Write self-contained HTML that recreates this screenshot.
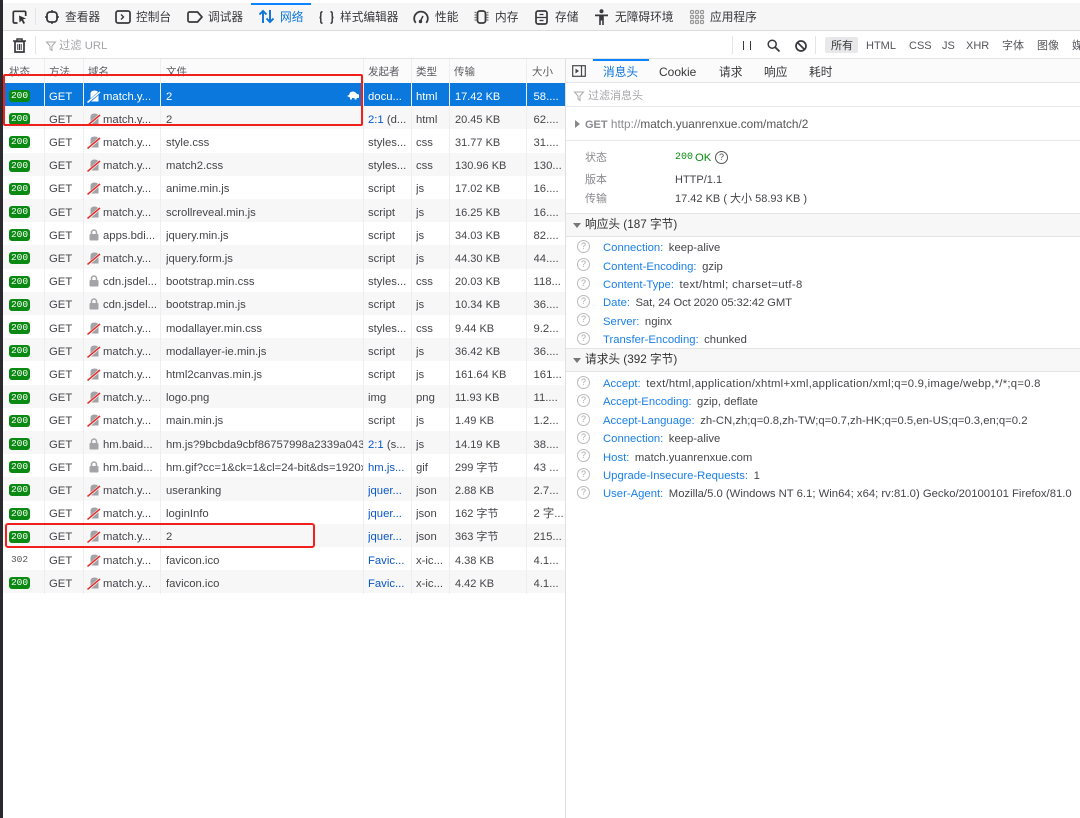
<!DOCTYPE html>
<html lang="zh-CN"><head><meta charset="utf-8"><title>网络</title>
<style>
html,body{margin:0;padding:0;background:#fff}
body{width:1080px;height:818px;position:relative;overflow:hidden;font:11px "Liberation Sans","Noto Sans CJK SC",sans-serif;color:#38383d}
.a{position:absolute;white-space:nowrap}
svg{position:absolute;overflow:visible}
.tb{font-size:11.7px;top:10.5px;line-height:14px;color:#38383d}
.v{position:absolute;width:1px;background:#e4e4e6}
.r{position:absolute;left:3px;width:562px;height:23.2px;line-height:23px;font-size:11.3px;color:#45454a}
.r.o{background:#f7f7f8}
.r span{position:absolute;top:2.5px;white-space:nowrap;overflow:hidden}
.r .s{left:6px;top:7px;width:21px;height:12px;background:#0a8a12;color:#fff;border-radius:3px;text-align:center;font:9.5px/12.5px "Liberation Mono",monospace}
.r .s.n{background:none;color:#555}
.r .m{left:46px}
.r .d{left:100px;width:58px}
.r .f{left:163px;width:197px}
.r .i{left:365px;width:44px;color:#45454a}
.r .i b{font-weight:normal;color:#0a58c8}
.r .t{left:413px;width:35px}
.r .z{left:452px;font-size:11px}
.r .y{left:530.5px;width:30px}
.r svg{left:84px;top:5.5px}
.r.sel{background:#0a78dc;color:#fff}
.r.sel .i,.r.sel .y{color:#fff}
.h{position:absolute;left:603px;font-size:11.3px;line-height:14px;white-space:nowrap;color:#45454a}
.h b{font-weight:normal;color:#1a7fe8;margin-right:5.5px}
.q{position:absolute;left:577px;width:11px;height:11px;border:1px solid #bbb;border-radius:50%;color:#aaa;font:9px/11px "Liberation Sans",sans-serif;text-align:center}
.sec{position:absolute;left:566px;width:514px;background:#f7f7f8;border-top:1px solid #e4e4e6;border-bottom:1px solid #e4e4e6;height:22px;line-height:22px;font-size:11.7px;color:#333}
.sec i{position:absolute;left:7px;top:9px;border:4px solid transparent;border-top:5px solid #777;border-bottom:0}
.sec span{position:absolute;left:19px}
.lb{position:absolute;left:585px;color:#8a8a8f;font-size:11px;line-height:14px}
.vl{position:absolute;left:675px;color:#45454a;font-size:11px;line-height:14px;white-space:nowrap}
.hd{position:absolute;top:65px;font-size:10.5px;line-height:14px;color:#5a5a60;white-space:nowrap}
.fl{top:39px;font-size:11px;line-height:15px;color:#55555a}
.tab{top:64.500px;font-size:11.700px;line-height:15px}
</style></head><body>
<svg width="0" height="0" style="position:absolute"><defs>
<symbol id="ns" viewBox="0 0 14 14"><path d="M3.500 12.500V5Q3.500 1.500 7.500 1.500T11.500 5V12.500z" fill="#a2a2a6"/><path d="M1 13.500L13 3" stroke="#fff" stroke-width="2.600"/><path d="M.5 13.500L13 3" stroke="#e0302c" stroke-width="1.500"/></symbol>
<symbol id="nw" viewBox="0 0 14 14"><path d="M3.500 12.500V5Q3.500 1.500 7.500 1.500T11.500 5V12.500z" fill="#fff"/><path d="M1 13.500L13 3" stroke="#0a78dc" stroke-width="2.600"/><path d="M.5 13.500L13 3" stroke="#fff" stroke-width="1.500"/></symbol>
<symbol id="lk" viewBox="0 0 14 14"><rect x="2.500" y="6" width="9" height="6.500" rx="1" fill="#a4a4a8"/><path d="M4.500 6V4.500a2.500 2.500 0 0 1 5 0V6" fill="none" stroke="#a4a4a8" stroke-width="1.500"/></symbol>
</defs></svg>

<div class="a" style="left:0;top:0;width:3px;height:818px;background:#2a2a2e"></div>
<div class="a" style="left:3px;top:0;width:1077px;height:3px;background:#fff"></div>
<div class="a" style="left:3px;top:3px;width:1077px;height:27px;background:#f6f6f7;border-bottom:1px solid #dcdcde"></div>
<div class="a" style="left:3px;top:31px;width:1077px;height:27px;background:#fff;border-bottom:1px solid #e4e4e6"></div>

<!-- top toolbar -->
<svg style="left:12px;top:10px" width="15" height="15" viewBox="0 0 15 15"><path d="M5.500 13H2.500a1.200 1.200 0 0 1-1.200-1.200V2.500A1.200 1.200 0 0 1 2.500 1.300h10a1.200 1.200 0 0 1 1.200 1.200V6" fill="none" stroke="#333" stroke-width="1.700"/><path d="M7 5.500l7 3-3 1 2 3.500-1.500 1-2-3.500-2 2z" fill="#333"/></svg>
<div class="v" style="left:35px;top:8px;height:17px"></div>
<svg style="left:45px;top:10px" width="14" height="14" viewBox="0 0 14 14"><rect x="2" y="2" width="10" height="10" rx="3" fill="none" stroke="#38383d" stroke-width="1.800"/><path d="M7 0v2.200M7 11.800V14M0 7h2.200M11.800 7H14" stroke="#38383d" stroke-width="1.500"/></svg>
<div class="a tb" style="left:65px">查看器</div>
<svg style="left:115px;top:10px" width="16" height="14" viewBox="0 0 16 14"><rect x="1" y="1" width="14" height="12" rx="2" fill="none" stroke="#38383d" stroke-width="1.700"/><path d="M6 4.500L8.500 7 6 9.500" fill="none" stroke="#38383d" stroke-width="1.400"/></svg>
<div class="a tb" style="left:136px">控制台</div>
<svg style="left:187px;top:11px" width="16" height="12" viewBox="0 0 16 12"><path d="M2.500 1h8L15 6l-4.500 5h-8A1.500 1.500 0 0 1 1 9.500v-7A1.500 1.500 0 0 1 2.500 1z" fill="none" stroke="#38383d" stroke-width="1.700" stroke-linejoin="round"/></svg>
<div class="a tb" style="left:208px">调试器</div>
<div class="a" style="left:251px;top:3px;width:60px;height:2px;background:#0a84ff"></div>
<svg style="left:258px;top:8px" width="17" height="17" viewBox="0 0 17 17"><path d="M5 15V3M1.500 6.500L5 3l3.500 3.500M12 2v12M8.500 10.500L12 14l3.500-3.500" fill="none" stroke="#0a74d8" stroke-width="1.900"/></svg>
<div class="a tb" style="left:280px;color:#0a74d8">网络</div>
<svg style="left:319px;top:11px" width="15" height="13" viewBox="0 0 15 13"><path d="M3.500.7Q1.800.7 1.800 2.500V5Q1.800 6.500.5 6.500 1.800 6.500 1.800 8V10.500Q1.800 12.300 3.500 12.300M11.500.7Q13.200.7 13.200 2.500V5Q13.200 6.500 14.500 6.500 13.200 6.500 13.200 8V10.500Q13.200 12.300 11.500 12.300" fill="none" stroke="#38383d" stroke-width="1.500"/></svg>
<div class="a tb" style="left:340px">样式编辑器</div>
<svg style="left:413px;top:10px" width="16" height="14" viewBox="0 0 16 14"><path d="M2.800 12.800A6.800 6.800 0 1 1 13.200 12.800" fill="none" stroke="#38383d" stroke-width="1.800"/><path d="M7.500 11L10 6" stroke="#38383d" stroke-width="1.500"/><circle cx="7.500" cy="11.500" r="1.700" fill="#38383d"/></svg>
<div class="a tb" style="left:435px">性能</div>
<svg style="left:474px;top:10px" width="15" height="14" viewBox="0 0 15 14"><rect x="3.500" y="1" width="8" height="12" rx="2.500" fill="none" stroke="#38383d" stroke-width="1.800"/><path d="M.5 2.500h2M.5 5h2M.5 7.500h2M.5 10h2M12.500 2.500h2M12.500 5h2M12.500 7.500h2M12.500 10h2" stroke="#777" stroke-width="1.200"/></svg>
<div class="a tb" style="left:495px">内存</div>
<svg style="left:535px;top:10px" width="13" height="15" viewBox="0 0 13 15"><rect x="1" y="1" width="11" height="13" rx="2" fill="none" stroke="#38383d" stroke-width="1.700"/><path d="M1 7.500h11M4.500 4.500h4M4.500 10.500h4" stroke="#38383d" stroke-width="1.200"/></svg>
<div class="a tb" style="left:555px">存储</div>
<svg style="left:594px;top:9px" width="15" height="16" viewBox="0 0 15 16"><circle cx="7.500" cy="2.200" r="2" fill="#38383d"/><path d="M1 5.500h13v1.800H9.800V16H8.200V11.500H6.800V16H5.200V7.300H1z" fill="#38383d"/></svg>
<div class="a tb" style="left:615px">无障碍环境</div>
<svg style="left:690px;top:10px" width="14" height="14" viewBox="0 0 14 14" fill="none" stroke="#999" stroke-width="1.200"><rect x=".5" y=".5" width="3" height="3" rx="1"/><rect x="5.500" y=".5" width="3" height="3" rx="1"/><rect x="10.500" y=".5" width="3" height="3" rx="1"/><rect x=".5" y="5.500" width="3" height="3" rx="1"/><rect x="5.500" y="5.500" width="3" height="3" rx="1"/><rect x="10.500" y="5.500" width="3" height="3" rx="1"/><rect x=".5" y="10.500" width="3" height="3" rx="1"/><rect x="5.500" y="10.500" width="3" height="3" rx="1"/><rect x="10.500" y="10.500" width="3" height="3" rx="1"/></svg>
<div class="a tb" style="left:710px">应用程序</div>

<!-- filter toolbar -->
<svg style="left:13px;top:38px" width="13" height="15" viewBox="0 0 13 15"><path d="M0 3h13M4 3V1h5v2" fill="none" stroke="#38383d" stroke-width="1.500"/><path d="M2 3.500h9V14H2z" fill="none" stroke="#38383d" stroke-width="1.700"/><path d="M4.800 6v6M6.500 6v6M8.200 6v6" stroke="#38383d"/></svg>
<div class="v" style="left:35px;top:36px;height:18px"></div>
<svg style="left:46px;top:41px" width="10" height="10" viewBox="0 0 10 10"><path d="M.5 1h9L6 5v4.500L4 8V5z" fill="none" stroke="#aaa"/></svg>
<div class="a" style="left:59px;top:38.500px;line-height:15px;font-size:11.300px;color:#a6a6ab">过滤 URL</div>
<div class="v" style="left:732px;top:36px;height:18px"></div>
<div class="a" style="left:743px;top:41px;width:1px;height:9px;background:#38383d"></div>
<div class="a" style="left:750px;top:41px;width:1px;height:9px;background:#38383d"></div>
<svg style="left:767px;top:39px" width="13" height="13" viewBox="0 0 13 13"><circle cx="5.200" cy="5.200" r="4" fill="none" stroke="#38383d" stroke-width="1.500"/><path d="M8.200 8.200L12.500 12.500" stroke="#38383d" stroke-width="1.800"/></svg>
<svg style="left:795px;top:39.500px" width="12" height="12" viewBox="0 0 12 12"><circle cx="6" cy="6" r="5" fill="none" stroke="#38383d" stroke-width="1.700"/><path d="M2.500 2.500l7 7" stroke="#38383d" stroke-width="1.700"/></svg>
<div class="v" style="left:815px;top:36px;height:18px"></div>
<div class="a" style="left:825px;top:37px;width:33px;height:16px;background:#e8e8ea;border-radius:2px"></div>
<div class="a fl" style="left:831px;color:#38383d">所有</div>
<div class="a fl" style="left:866px">HTML</div>
<div class="a fl" style="left:909px">CSS</div>
<div class="a fl" style="left:942px">JS</div>
<div class="a fl" style="left:966px">XHR</div>
<div class="a fl" style="left:1002px">字体</div>
<div class="a fl" style="left:1037px">图像</div>
<div class="a fl" style="left:1072px">媒</div>

<!-- table header -->
<div class="a" style="left:3px;top:59px;width:562px;height:24px;background:#fbfbfb;border-bottom:1px solid #e4e4e6"></div>
<div class="hd" style="left:9px">状态</div>
<div class="hd" style="left:49px">方法</div>
<div class="hd" style="left:88px">域名</div>
<div class="hd" style="left:166px">文件</div>
<div class="hd" style="left:368px">发起者</div>
<div class="hd" style="left:416px">类型</div>
<div class="hd" style="left:454px">传输</div>
<div class="hd" style="left:532px">大小</div>

<!-- rows -->
<div class="r sel" style="top:83px"><span class="s">200</span><span class="m">GET</span><svg width="14" height="14"><use href="#nw"/></svg><span class="d">match.y...</span><span class="f">2</span><span class="i">docu...</span><span class="t">html</span><span class="z">17.42 KB</span><span class="y">58....</span></div>
<div class="r o" style="top:106.200px"><span class="s">200</span><span class="m">GET</span><svg width="14" height="14"><use href="#ns"/></svg><span class="d">match.y...</span><span class="f">2</span><span class="i"><b>2:1</b> (d...</span><span class="t">html</span><span class="z">20.45 KB</span><span class="y">62....</span></div>
<div class="r" style="top:129.400px"><span class="s">200</span><span class="m">GET</span><svg width="14" height="14"><use href="#ns"/></svg><span class="d">match.y...</span><span class="f">style.css</span><span class="i">styles...</span><span class="t">css</span><span class="z">31.77 KB</span><span class="y">31....</span></div>
<div class="r o" style="top:152.600px"><span class="s">200</span><span class="m">GET</span><svg width="14" height="14"><use href="#ns"/></svg><span class="d">match.y...</span><span class="f">match2.css</span><span class="i">styles...</span><span class="t">css</span><span class="z">130.96 KB</span><span class="y">130...</span></div>
<div class="r" style="top:175.800px"><span class="s">200</span><span class="m">GET</span><svg width="14" height="14"><use href="#ns"/></svg><span class="d">match.y...</span><span class="f">anime.min.js</span><span class="i">script</span><span class="t">js</span><span class="z">17.02 KB</span><span class="y">16....</span></div>
<div class="r o" style="top:199px"><span class="s">200</span><span class="m">GET</span><svg width="14" height="14"><use href="#ns"/></svg><span class="d">match.y...</span><span class="f">scrollreveal.min.js</span><span class="i">script</span><span class="t">js</span><span class="z">16.25 KB</span><span class="y">16....</span></div>
<div class="r" style="top:222.200px"><span class="s">200</span><span class="m">GET</span><svg width="14" height="14"><use href="#lk"/></svg><span class="d">apps.bdi...</span><span class="f">jquery.min.js</span><span class="i">script</span><span class="t">js</span><span class="z">34.03 KB</span><span class="y">82....</span></div>
<div class="r o" style="top:245.400px"><span class="s">200</span><span class="m">GET</span><svg width="14" height="14"><use href="#ns"/></svg><span class="d">match.y...</span><span class="f">jquery.form.js</span><span class="i">script</span><span class="t">js</span><span class="z">44.30 KB</span><span class="y">44....</span></div>
<div class="r" style="top:268.600px"><span class="s">200</span><span class="m">GET</span><svg width="14" height="14"><use href="#lk"/></svg><span class="d">cdn.jsdel...</span><span class="f">bootstrap.min.css</span><span class="i">styles...</span><span class="t">css</span><span class="z">20.03 KB</span><span class="y">118...</span></div>
<div class="r o" style="top:291.800px"><span class="s">200</span><span class="m">GET</span><svg width="14" height="14"><use href="#lk"/></svg><span class="d">cdn.jsdel...</span><span class="f">bootstrap.min.js</span><span class="i">script</span><span class="t">js</span><span class="z">10.34 KB</span><span class="y">36....</span></div>
<div class="r" style="top:315px"><span class="s">200</span><span class="m">GET</span><svg width="14" height="14"><use href="#ns"/></svg><span class="d">match.y...</span><span class="f">modallayer.min.css</span><span class="i">styles...</span><span class="t">css</span><span class="z">9.44 KB</span><span class="y">9.2...</span></div>
<div class="r o" style="top:338.200px"><span class="s">200</span><span class="m">GET</span><svg width="14" height="14"><use href="#ns"/></svg><span class="d">match.y...</span><span class="f">modallayer-ie.min.js</span><span class="i">script</span><span class="t">js</span><span class="z">36.42 KB</span><span class="y">36....</span></div>
<div class="r" style="top:361.400px"><span class="s">200</span><span class="m">GET</span><svg width="14" height="14"><use href="#ns"/></svg><span class="d">match.y...</span><span class="f">html2canvas.min.js</span><span class="i">script</span><span class="t">js</span><span class="z">161.64 KB</span><span class="y">161...</span></div>
<div class="r o" style="top:384.600px"><span class="s">200</span><span class="m">GET</span><svg width="14" height="14"><use href="#ns"/></svg><span class="d">match.y...</span><span class="f">logo.png</span><span class="i">img</span><span class="t">png</span><span class="z">11.93 KB</span><span class="y">11....</span></div>
<div class="r" style="top:407.800px"><span class="s">200</span><span class="m">GET</span><svg width="14" height="14"><use href="#ns"/></svg><span class="d">match.y...</span><span class="f">main.min.js</span><span class="i">script</span><span class="t">js</span><span class="z">1.49 KB</span><span class="y">1.2...</span></div>
<div class="r o" style="top:431px"><span class="s">200</span><span class="m">GET</span><svg width="14" height="14"><use href="#lk"/></svg><span class="d">hm.baid...</span><span class="f">hm.js?9bcbda9cbf86757998a2339a0437208e</span><span class="i"><b>2:1</b> (s...</span><span class="t">js</span><span class="z">14.19 KB</span><span class="y">38....</span></div>
<div class="r" style="top:454.200px"><span class="s">200</span><span class="m">GET</span><svg width="14" height="14"><use href="#lk"/></svg><span class="d">hm.baid...</span><span class="f">hm.gif?cc=1&amp;ck=1&amp;cl=24-bit&amp;ds=1920x1080</span><span class="i"><b>hm.js...</b></span><span class="t">gif</span><span class="z">299 字节</span><span class="y">43 ...</span></div>
<div class="r o" style="top:477.400px"><span class="s">200</span><span class="m">GET</span><svg width="14" height="14"><use href="#ns"/></svg><span class="d">match.y...</span><span class="f">useranking</span><span class="i"><b>jquer...</b></span><span class="t">json</span><span class="z">2.88 KB</span><span class="y">2.7...</span></div>
<div class="r" style="top:500.600px"><span class="s">200</span><span class="m">GET</span><svg width="14" height="14"><use href="#ns"/></svg><span class="d">match.y...</span><span class="f">loginInfo</span><span class="i"><b>jquer...</b></span><span class="t">json</span><span class="z">162 字节</span><span class="y">2 字...</span></div>
<div class="r o" style="top:523.800px"><span class="s">200</span><span class="m">GET</span><svg width="14" height="14"><use href="#ns"/></svg><span class="d">match.y...</span><span class="f">2</span><span class="i"><b>jquer...</b></span><span class="t">json</span><span class="z">363 字节</span><span class="y">215...</span></div>
<div class="r" style="top:547px"><span class="s n">302</span><span class="m">GET</span><svg width="14" height="14"><use href="#ns"/></svg><span class="d">match.y...</span><span class="f">favicon.ico</span><span class="i"><b>Favic...</b></span><span class="t">x-ic...</span><span class="z">4.38 KB</span><span class="y">4.1...</span></div>
<div class="r o" style="top:570.200px"><span class="s">200</span><span class="m">GET</span><svg width="14" height="14"><use href="#ns"/></svg><span class="d">match.y...</span><span class="f">favicon.ico</span><span class="i"><b>Favic...</b></span><span class="t">x-ic...</span><span class="z">4.42 KB</span><span class="y">4.1...</span></div>

<!-- column dividers -->
<div class="v" style="left:44px;top:59px;height:535px;background:#eeeef0"></div>
<div class="v" style="left:83px;top:59px;height:535px;background:#eeeef0"></div>
<div class="v" style="left:160px;top:59px;height:535px;background:#eeeef0"></div>
<div class="v" style="left:363px;top:59px;height:535px;background:#eeeef0"></div>
<div class="v" style="left:411px;top:59px;height:535px;background:#eeeef0"></div>
<div class="v" style="left:449px;top:59px;height:535px;background:#eeeef0"></div>
<div class="v" style="left:526px;top:59px;height:535px;background:#eeeef0"></div>
<div class="v" style="left:565px;top:59px;height:759px;background:#e0e0e2"></div>
<svg style="left:347px;top:91px" width="12" height="9" viewBox="0 0 12 9"><path d="M0 5l2-1 1-2.500Q7-1 10 3l2 .5V7H9.500V8.500h-2V7H5v1.500H3V6.500z" fill="#fff"/></svg>

<!-- right panel -->
<div class="a" style="left:566px;top:59px;width:514px;height:23px;background:#fbfbfb;border-bottom:1px solid #e4e4e6"></div>
<svg style="left:572px;top:65px" width="14" height="12" viewBox="0 0 14 12"><rect x=".7" y=".7" width="12.600" height="10.600" fill="none" stroke="#45454a" stroke-width="1.200"/><path d="M9.500 1v10" stroke="#45454a" stroke-width="1.200"/><path d="M3.500 3.500L7 6 3.500 8.500z" fill="#45454a"/></svg>
<div class="a" style="left:593px;top:59px;width:56px;height:2px;background:#0a84ff"></div>
<div class="a tab" style="left:603px;color:#0a74d8">消息头</div>
<div class="a tab" style="left:659px;font-size:12px">Cookie</div>
<div class="a tab" style="left:719px">请求</div>
<div class="a tab" style="left:764px">响应</div>
<div class="a tab" style="left:809px">耗时</div>
<div class="a" style="left:566px;top:106px;width:514px;height:1px;background:#e8e8ea"></div>
<svg style="left:574px;top:91px" width="10" height="10" viewBox="0 0 10 10"><path d="M.5 1h9L6 5v4.500L4 8V5z" fill="none" stroke="#aaa"/></svg>
<div class="a" style="left:588px;top:88.500px;font-size:11px;line-height:15px;color:#a6a6ab">过滤消息头</div>
<div class="a" style="left:575px;top:120px;border-left:5px solid #888;border-top:4px solid transparent;border-bottom:4px solid transparent"></div>
<div class="a" style="left:585px;top:117px;font-size:11.800px;line-height:15px;color:#555"><b style="color:#8a8a8f;font-size:11px">GET</b> <span style="color:#8a8a8f">http://</span>match.yuanrenxue.com/match/2</div>
<div class="a" style="left:566px;top:140px;width:514px;height:1px;background:#e8e8ea"></div>
<div class="lb" style="top:151px">状态</div>
<div class="vl" style="top:151px;font-family:'Liberation Mono',monospace;font-size:10px;color:#0a8a12">200</div>
<div class="vl" style="top:151px;left:695px;color:#0a8a12;font-size:11.300px">OK</div>
<div class="q" style="left:715px;top:151px;border-color:#555;color:#555">?</div>
<div class="lb" style="top:173px">版本</div><div class="vl" style="top:173px">HTTP/1.1</div>
<div class="lb" style="top:192px">传输</div><div class="vl" style="top:192px">17.42 KB ( 大小 58.93 KB )</div>

<div class="sec" style="top:213px"><i></i><span>响应头 (187 字节)</span></div>
<div class="q" style="top:240px">?</div><div class="h" style="top:241px"><b>Connection:</b>keep-alive</div>
<div class="q" style="top:258px">?</div><div class="h" style="top:260px"><b>Content-Encoding:</b>gzip</div>
<div class="q" style="top:277px">?</div><div class="h" style="top:278px"><b>Content-Type:</b><span style="letter-spacing:.33px">text/html; charset=utf-8</span></div>
<div class="q" style="top:295px">?</div><div class="h" style="top:296px"><b>Date:</b><span style="letter-spacing:-.13px">Sat, 24 Oct 2020 05:32:42 GMT</span></div>
<div class="q" style="top:313px">?</div><div class="h" style="top:315px"><b>Server:</b>nginx</div>
<div class="q" style="top:332px">?</div><div class="h" style="top:333px"><b>Transfer-Encoding:</b>chunked</div>

<div class="sec" style="top:348px"><i></i><span>请求头 (392 字节)</span></div>
<div class="q" style="top:376px">?</div><div class="h" style="top:377px"><b>Accept:</b><span style="letter-spacing:.27px">text/html,application/xhtml+xml,application/xml;q=0.9,image/webp,*/*;q=0.8</span></div>
<div class="q" style="top:394px">?</div><div class="h" style="top:395px"><b>Accept-Encoding:</b>gzip, deflate</div>
<div class="q" style="top:413px">?</div><div class="h" style="top:414px"><b>Accept-Language:</b>zh-CN,zh;q=0.8,zh-TW;q=0.7,zh-HK;q=0.5,en-US;q=0.3,en;q=0.2</div>
<div class="q" style="top:431px">?</div><div class="h" style="top:432px"><b>Connection:</b>keep-alive</div>
<div class="q" style="top:449px">?</div><div class="h" style="top:451px"><b>Host:</b>match.yuanrenxue.com</div>
<div class="q" style="top:468px">?</div><div class="h" style="top:469px"><b>Upgrade-Insecure-Requests:</b>1</div>
<div class="q" style="top:486px">?</div><div class="h" style="top:487px"><b>User-Agent:</b>Mozilla/5.0 (Windows NT 6.1; Win64; x64; rv:81.0) Gecko/20100101 Firefox/81.0</div>

<!-- red annotation boxes -->
<div class="a" style="left:3px;top:74px;width:356px;height:48px;border:2px solid #f0201c;border-radius:2px"></div>
<div class="a" style="left:5px;top:523px;width:306px;height:21px;border:2px solid #f0201c;border-radius:3px"></div>
</body></html>
